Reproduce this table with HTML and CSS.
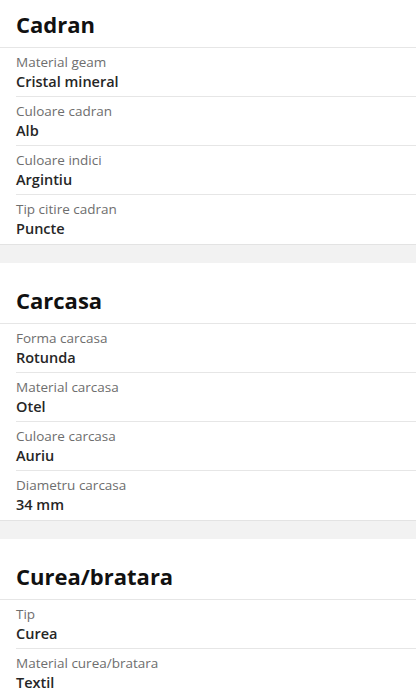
FILE: index.html
```html
<!DOCTYPE html>
<html lang="ro">
<head>
    <meta charset="UTF-8">
    <meta name="viewport" content="width=device-width, initial-scale=1.0">
    <title>Specificatii</title>
    <link rel="stylesheet" href="styles.css">
</head>
<body>
    <div class="page">
        <section class="specs specs-first">
            <h2 class="specs-title">Cadran</h2>
            <div class="spec-row">
                <div class="spec-label">Material geam</div>
                <div class="spec-value">Cristal mineral</div>
            </div>
            <div class="spec-row">
                <div class="spec-label">Culoare cadran</div>
                <div class="spec-value">Alb</div>
            </div>
            <div class="spec-row">
                <div class="spec-label">Culoare indici</div>
                <div class="spec-value">Argintiu</div>
            </div>
            <div class="spec-row">
                <div class="spec-label">Tip citire cadran</div>
                <div class="spec-value">Puncte</div>
            </div>
        </section>
        <div class="spacer"></div>
        <section class="specs">
            <h2 class="specs-title">Carcasa</h2>
            <div class="spec-row">
                <div class="spec-label">Forma carcasa</div>
                <div class="spec-value">Rotunda</div>
            </div>
            <div class="spec-row">
                <div class="spec-label">Material carcasa</div>
                <div class="spec-value">Otel</div>
            </div>
            <div class="spec-row">
                <div class="spec-label">Culoare carcasa</div>
                <div class="spec-value">Auriu</div>
            </div>
            <div class="spec-row">
                <div class="spec-label">Diametru carcasa</div>
                <div class="spec-value">34 mm</div>
            </div>
        </section>
        <div class="spacer"></div>
        <section class="specs">
            <h2 class="specs-title">Curea/bratara</h2>
            <div class="spec-row">
                <div class="spec-label">Tip</div>
                <div class="spec-value">Curea</div>
            </div>
            <div class="spec-row">
                <div class="spec-label">Material curea/bratara</div>
                <div class="spec-value">Textil</div>
            </div>
        </section>
    </div>
</body>
</html>
```

FILE: styles.css
```css
body {
    margin: 0;
    font-family: "Open Sans", Arial, sans-serif;
    background-color: #ffffff;
    overflow: hidden;
}
.page {
    margin-top: -13px; /* page is scrolled a little */
}
.specs {
    background-color: #ffffff;
}
.specs-title {
    margin: 0;
    padding: 22px 16px 8px;
    font-size: 22px;
    line-height: 30px;
    font-weight: 700;
    color: #111111;
    border-bottom: 1px solid #e6e6e6;
}
.spec-row {
    margin-left: 16px;
    padding: 5px 0 4px;
    border-bottom: 1px solid #e6e6e6;
}
.spec-row:last-child {
    border-bottom: none;
    padding-bottom: 5px;
}
.spec-label {
    font-size: 13.5px;
    line-height: 18px;
    color: #6e6e6e;
}
.spec-value {
    font-size: 14.5px;
    line-height: 20px;
    padding-top: 1px;
    color: #262626;
    font-weight: 600;
}
.spacer {
    height: 18px;
    background-color: #f2f2f2;
    border-top: 1px solid #e3e3e3;
}
```
